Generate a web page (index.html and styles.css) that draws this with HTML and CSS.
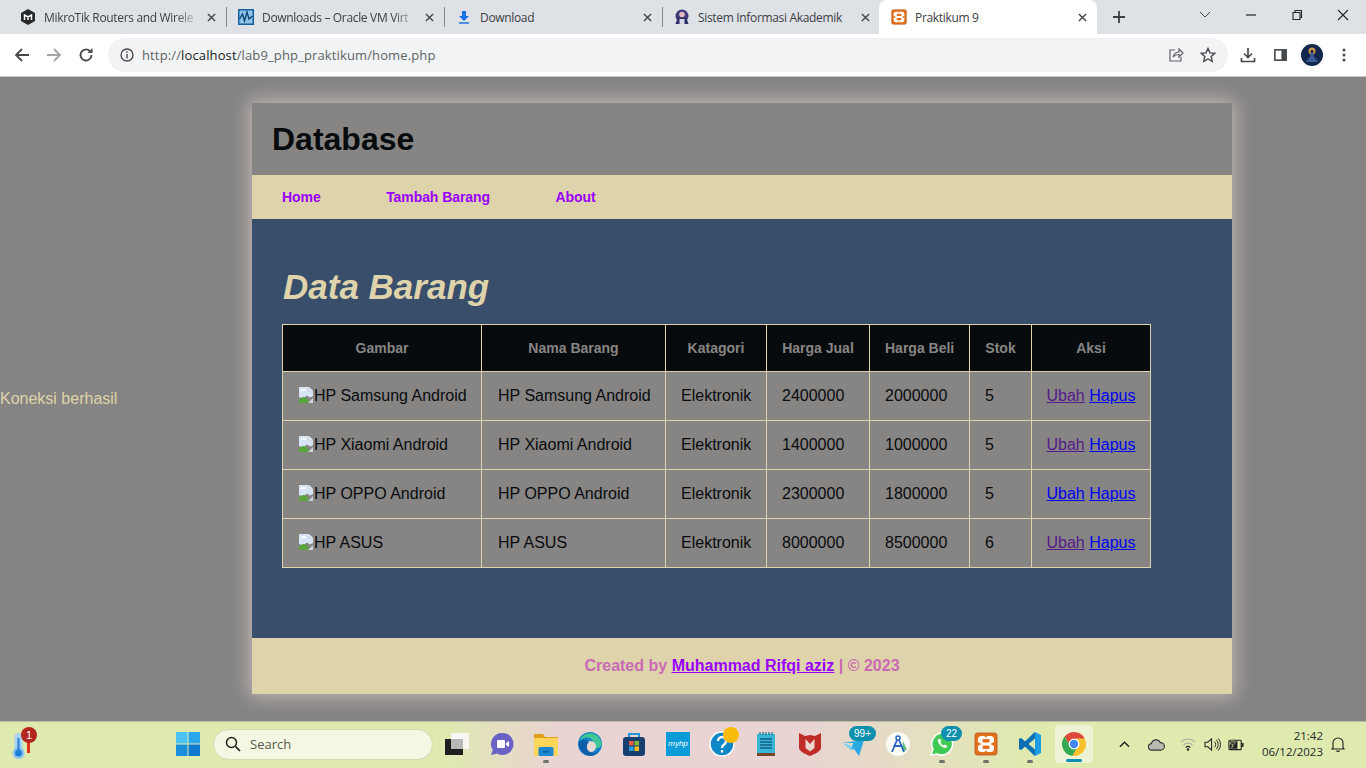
FILE: index.html
```html
<!DOCTYPE html>
<html lang="id">
<head>
<meta charset="utf-8">
<title>Praktikum 9</title>
<link rel="stylesheet" href="styles.css">
</head>
<body>
<svg class="defs" width="0" height="0" aria-hidden="true">
  <symbol id="x" viewBox="0 0 10 10"><path d="M1 1l8 8M9 1l-8 8" fill="none" stroke="#45484d" stroke-width="1.6"/></symbol>
  <symbol id="xampp" viewBox="0 0 24 24"><rect x="1" y="1" width="22" height="22" rx="2.500" fill="#e2701c"/><rect x="1" y="1" width="22" height="22" rx="2.500" fill="none" stroke="#b9551a" stroke-width=".8"/><rect x="4" y="4" width="16" height="16" rx="3.500" fill="#fff"/><rect x="8.500" y="7" width="7" height="3.500" rx="1.200" fill="#e2701c"/><rect x="8.500" y="13.500" width="7" height="3.500" rx="1.200" fill="#e2701c"/><path d="M4 10l3.500 2L4 14zM20 10l-3.500 2 3.500 2z" fill="#e2701c"/><path d="M10.500 4h3L12 5.800zM10.500 20h3L12 18.200z" fill="#e2701c"/></symbol>
  <symbol id="broken" viewBox="0 0 16 16"><path d="M1 0h10l4 4v5l-3 1.500-3-2-4 3-4-1.500z" fill="#d6e4f6"/><path d="M11 0l4 4h-4z" fill="#f6f8fb" stroke="#aeb6c0" stroke-width=".5"/><path d="M2.500 4a1.500 1.500 0 0 1 2-1.500 2 2 0 0 1 3.500 1.500z" fill="#fff"/><path d="M1 16v-3c3-4 6-4 9 0l1 3z" fill="#58a53a"/><path d="M10 16l5-5v5z" fill="#c8d4e0"/></symbol>
</svg>

<div class="browser">
  <div class="tabstrip">
    <div class="tab">
      <svg class="fav" viewBox="0 0 16 16"><path d="M8 0l7 4v8l-7 4-7-4V4z" fill="#26282b"/><path d="M4.500 11V6l3.500 2 3.500-2v5M8 8v3" fill="none" stroke="#fff" stroke-width="1.500"/></svg>
      <span class="tabtitle fade">MikroTik Routers and Wirele</span>
      <svg class="tabx"><use href="#x"/></svg>
    </div>
    <div class="tab sep">
      <svg class="fav" viewBox="0 0 16 16"><rect width="16" height="16" fill="#14609f"/><rect x="1.500" y="1.500" width="13" height="13" fill="#8fc4e8"/><path d="M1.500 10l3-5 2 7 2.500-9 2 7 3.500-3" fill="none" stroke="#0f4478" stroke-width="1.400"/></svg>
      <span class="tabtitle fade">Downloads – Oracle VM Virt</span>
      <svg class="tabx"><use href="#x"/></svg>
    </div>
    <div class="tab sep">
      <svg class="fav" viewBox="0 0 16 16"><path d="M6 2h4v5h3l-5 5-5-5h3z" fill="#1a73e8"/><path d="M3 14h10" stroke="#1a73e8" stroke-width="1.500"/></svg>
      <span class="tabtitle">Download</span>
      <svg class="tabx"><use href="#x"/></svg>
    </div>
    <div class="tab sep">
      <svg class="fav" viewBox="0 0 16 16"><circle cx="8" cy="7" r="6.500" fill="#3f3a78"/><circle cx="8" cy="5.500" r="2.800" fill="#e4b8c4"/><path d="M1.500 15l2-6h9l2 6z" fill="#2b2f66"/><path d="M5.500 15V10h5v5z" fill="#d9d6e8"/></svg>
      <span class="tabtitle">Sistem Informasi Akademik</span>
      <svg class="tabx"><use href="#x"/></svg>
    </div>
    <div class="tab active">
      <svg class="fav"><use href="#xampp"/></svg>
      <span class="tabtitle">Praktikum 9</span>
      <svg class="tabx"><use href="#x"/></svg>
    </div>
    <svg class="newtab" viewBox="0 0 14 14"><path d="M7 1v12M1 7h12" fill="none" stroke="#3c3f43" stroke-width="1.800"/></svg>
    <div class="winctl">
      <svg viewBox="0 0 46 16"><path d="M18 5l5 5 5-5" fill="none" stroke="#3c3f43"/></svg>
      <svg viewBox="0 0 46 16"><path d="M18 8h10" stroke="#22262a" stroke-width="1.200"/></svg>
      <svg viewBox="0 0 46 16"><path d="M19 5.500h7v7h-7zM21 5.500v-2h6.500v7H26" fill="none" stroke="#22262a" stroke-width="1.100"/></svg>
      <svg viewBox="0 0 46 16"><path d="M18 3l10 10M28 3L18 13" fill="none" stroke="#22262a" stroke-width="1.100"/></svg>
    </div>
  </div>
  <div class="toolbar">
    <svg class="tool" viewBox="0 0 16 16"><path d="M15 8H2M8 2L2 8l6 6" fill="none" stroke="#45484d" stroke-width="1.800"/></svg>
    <svg class="tool" viewBox="0 0 16 16"><path d="M1 8h13M8 2l6 6-6 6" fill="none" stroke="#a3a6aa" stroke-width="1.800"/></svg>
    <svg class="tool" viewBox="0 0 16 16"><path d="M13.500 8A5.500 5.500 0 1 1 11.800 4" fill="none" stroke="#45484d" stroke-width="1.800"/><path d="M14.500 1v5h-5z" fill="#45484d"/></svg>
    <div class="omnibox">
      <svg class="info" viewBox="0 0 14 14"><circle cx="7" cy="7" r="6" fill="none" stroke="#45484d" stroke-width="1.300"/><path d="M7 6v4.500M7 3.200v1.600" stroke="#45484d" stroke-width="1.400"/></svg>
      <span class="url">http://<b>localhost</b>/lab9_php_praktikum/home.php</span>
      <svg class="omni-act share" viewBox="0 0 16 16"><path d="M7 3H2v11h11v-4" fill="none" stroke="#5f6368" stroke-width="1.200"/><path d="M5 10c1-3 3-5 6-5V2l4 4-4 4V7.500C8.500 7.500 6.500 8.500 5 10z" fill="none" stroke="#5f6368" stroke-width="1.200"/></svg>
      <svg class="omni-act" viewBox="0 0 16 16"><path d="M8 1.500l2 4.400 4.700.5-3.500 3.200 1 4.700L8 12l-4.200 2.300 1-4.700L1.300 6.400 6 5.900z" fill="none" stroke="#45484d" stroke-width="1.400"/></svg>
    </div>
    <svg class="tool tool-dl" viewBox="0 0 16 16"><path d="M8 1v9M4 6.500L8 10.500l4-4M1.500 11v3.500h13V11" fill="none" stroke="#45484d" stroke-width="1.700"/></svg>
    <svg class="tool tool-side" viewBox="0 0 16 16"><rect x="2" y="2.500" width="12" height="11" fill="none" stroke="#45484d" stroke-width="1.700"/><rect x="9" y="2.500" width="5" height="11" fill="#45484d"/></svg>
    <svg class="avatar" viewBox="0 0 22 22"><circle cx="11" cy="11" r="11" fill="#14284f"/><circle cx="11" cy="7" r="3.500" fill="#c9964a"/><path d="M11 9c-1.500 0-2 2-2 4l-4 5h12l-4-5c0-2-.5-4-2-4z" fill="#3e5c93"/><circle cx="11" cy="7.500" r="1.500" fill="#10203f"/></svg>
    <svg class="tool tool-more" viewBox="0 0 4 16"><circle cx="2" cy="3" r="1.500" fill="#45484d"/><circle cx="2" cy="8" r="1.500" fill="#45484d"/><circle cx="2" cy="13" r="1.500" fill="#45484d"/></svg>
  </div>
</div>

<main class="page">
  <div class="status">Koneksi berhasil</div>
  <div class="container">
    <header class="head"><h1>Database</h1></header>
    <nav class="nav">
      <a href="#">Home</a>
      <a href="#">Tambah Barang</a>
      <a href="#">About</a>
    </nav>
    <section class="content">
      <h2>Data Barang</h2>
      <table>
        <thead>
          <tr><th class="c1">Gambar</th><th class="c2">Nama Barang</th><th class="c3">Katagori</th><th class="c4">Harga Jual</th><th class="c5">Harga Beli</th><th class="c6">Stok</th><th class="c7">Aksi</th></tr>
        </thead>
        <tbody>
          <tr><td><svg class="broken"><use href="#broken"/></svg>HP Samsung Android</td><td>HP Samsung Android</td><td>Elektronik</td><td>2400000</td><td>2000000</td><td>5</td><td class="aksi"><a class="visited" href="#">Ubah</a> <a class="link" href="#">Hapus</a></td></tr>
          <tr><td><svg class="broken"><use href="#broken"/></svg>HP Xiaomi Android</td><td>HP Xiaomi Android</td><td>Elektronik</td><td>1400000</td><td>1000000</td><td>5</td><td class="aksi"><a class="visited" href="#">Ubah</a> <a class="link" href="#">Hapus</a></td></tr>
          <tr><td><svg class="broken"><use href="#broken"/></svg>HP OPPO Android</td><td>HP OPPO Android</td><td>Elektronik</td><td>2300000</td><td>1800000</td><td>5</td><td class="aksi"><a class="link" href="#">Ubah</a> <a class="link" href="#">Hapus</a></td></tr>
          <tr><td><svg class="broken"><use href="#broken"/></svg>HP ASUS</td><td>HP ASUS</td><td>Elektronik</td><td>8000000</td><td>8500000</td><td>6</td><td class="aksi"><a class="visited" href="#">Ubah</a> <a class="link" href="#">Hapus</a></td></tr>
        </tbody>
      </table>
    </section>
    <footer class="foot">Created by <a href="#">Muhammad Rifqi aziz</a> | © 2023</footer>
  </div>
</main>

<div class="taskbar">
  <div class="weather">
    <svg viewBox="0 0 14 26" class="thermo"><rect x="2.500" y="0" width="8" height="24" rx="4" fill="#a9d3ee"/><circle cx="6.500" cy="20" r="6" fill="#8cc4ee"/><circle cx="6.500" cy="20" r="3.500" fill="#1f7fd6"/><path d="M6.500 5v14" stroke="#2a86dc" stroke-width="2.200"/></svg>
    <i class="pin"></i>
    <span class="alert">1</span>
  </div>
  <div class="tb-icon start">
    <svg viewBox="0 0 24 24"><rect x="0" y="0" width="11.500" height="11.500" fill="#4cc2f1"/><rect x="12.500" y="0" width="11.500" height="11.500" fill="#2ba6e8"/><rect x="0" y="12.500" width="11.500" height="11.500" fill="#1a8fdc"/><rect x="12.500" y="12.500" width="11.500" height="11.500" fill="#0f78cf"/></svg>
  </div>
  <div class="search">
    <svg viewBox="0 0 16 16"><circle cx="6.500" cy="6.500" r="5" fill="none" stroke="#222" stroke-width="1.500"/><path d="M10.500 10.500L15 15" stroke="#222" stroke-width="1.700"/></svg>
    <span>Search</span>
  </div>
  <div class="tb-icon">
    <svg viewBox="0 0 24 24" class="over"><rect x="5" y="1" width="18" height="16" fill="#f6f6f2"/><rect x="-1" y="7" width="18" height="16" fill="#1e1e1e"/><rect x="5" y="7" width="12" height="10" fill="#b8b8b8"/></svg>
  </div>
  <div class="tb-icon">
    <svg viewBox="0 0 24 24"><path d="M12.500 1a11 11 0 1 1-5.500 20.500L1 23l1.800-5A11 11 0 0 1 12.500 1z" fill="#6a62c4"/><rect x="7" y="8" width="8" height="8" rx="1.200" fill="#fff"/><path d="M16 11l3-2v6l-3-2z" fill="#fff"/></svg>
  </div>
  <div class="tb-icon dot">
    <svg viewBox="0 0 24 24"><path d="M0 3a1 1 0 0 1 1-1h8l2 3h13v19H0z" fill="#e0a01a"/><rect x="0" y="6" width="24" height="18" rx="1" fill="#fbd65a"/><rect x="4.500" y="15" width="15" height="9" rx="1.500" fill="#1c86d1"/><rect x="9" y="19" width="6" height="1.500" fill="#0d5e9e"/></svg>
  </div>
  <div class="tb-icon">
    <svg viewBox="0 0 24 24"><circle cx="12" cy="12" r="12" fill="#1383c9"/><path d="M1 10A11.500 11.500 0 0 1 23.500 11c.5 3-2 5.500-6 5.500-3 0-5.500-1-5.500-3.500 0-1.500 2-2.500 3-2.500C15 7 11 5 7.500 5.500 4.500 6 2.500 8 1 10z" fill="#3fc796"/><circle cx="12.500" cy="14.500" r="5.500" fill="#e8d8d2"/><path d="M11 10c-3 2-3 8 1 10 3 1.500 6 1 9-1-3 4.500-9 6-13.500 3.500C3 20 0 15 1 10c2-3 6-3 10 0z" fill="#0c5fa8"/></svg>
  </div>
  <div class="tb-icon">
    <svg viewBox="0 0 24 24"><path d="M7 7V2h10v5" fill="none" stroke="#1f97d4" stroke-width="2"/><rect x="1" y="5" width="22" height="19" rx="3" fill="#173f70"/><rect x="7" y="9" width="4.500" height="4.500" fill="#f15a3b"/><rect x="12.500" y="9" width="4.500" height="4.500" fill="#7cbc3b"/><rect x="7" y="14.500" width="4.500" height="4.500" fill="#21a3e0"/><rect x="12.500" y="14.500" width="4.500" height="4.500" fill="#fbbb1c"/></svg>
  </div>
  <div class="tb-icon">
    <div class="myhp">myhp</div>
  </div>
  <div class="tb-icon">
    <svg viewBox="0 0 28 28" class="help"><circle cx="14" cy="14" r="12" fill="#0f86c6" stroke="#fff" stroke-width="1.500"/><path d="M10 11a4 4 0 1 1 6 3.500c-1.500 1-2 1.500-2 3.500M14 20v2.500" fill="none" stroke="#fff" stroke-width="2.300"/><circle cx="23" cy="5" r="8" fill="#fbbc09"/></svg>
  </div>
  <div class="tb-icon">
    <svg viewBox="0 0 24 24"><path d="M3 2h18v19H3z" fill="#38b7d8"/><path d="M3 21h18v3H3z" fill="#7a4426"/><path d="M6 0v3M9 0v3M12 0v3M15 0v3M18 0v3" stroke="#0e6f8e" stroke-width="1.200"/><path d="M6 7h12M6 10h12M6 13h12M6 16h12" stroke="#125f85" stroke-width="1.700"/></svg>
  </div>
  <div class="tb-icon">
    <svg viewBox="0 0 24 24"><path d="M1 1l6 3 5-1 5 1 6-3v15c0 3-6 6-11 8C7 22 1 19 1 16z" fill="#c02b28"/><path d="M7.500 7l4.500 5 4.500-5v9L12 19.500 7.500 16z" fill="#ecd8d0"/></svg>
  </div>
  <div class="tb-icon badge-host">
    <svg viewBox="0 0 24 24"><path d="M0 11l22-3-5 16-5-7-3 1 2-7z" fill="#2aa8e0"/><path d="M0 11l11 3-2 4z" fill="#7fd0ef"/></svg>
    <span class="bubble wide">99+</span>
  </div>
  <div class="tb-icon">
    <svg viewBox="0 0 24 24"><circle cx="12" cy="12" r="12" fill="#fbfbf6"/><path d="M17 9l4 9-5 1z" fill="#5bbf7a"/><circle cx="12" cy="6" r="2" fill="none" stroke="#2b64c4" stroke-width="1.500"/><path d="M11 8l-5 12M13 8l5 12M7.500 14h9" fill="none" stroke="#2b64c4" stroke-width="1.800"/></svg>
  </div>
  <div class="tb-icon dot badge-host">
    <svg viewBox="0 0 24 24"><path d="M12 1a11 11 0 1 1-5 21l-6 1 2-6A11 11 0 0 1 12 1z" fill="#3fca55" stroke="#fff" stroke-width="1.500"/><path d="M8 7c-1 3 3 9 8 9l1.500-2-3-1.500-1 1c-1.500-.5-2.500-2-3-3l1-1L10 7z" fill="#fff"/></svg>
    <span class="bubble">22</span>
  </div>
  <div class="tb-icon dot">
    <svg><use href="#xampp"/></svg>
  </div>
  <div class="tb-icon dot">
    <svg viewBox="0 0 24 24"><path d="M17 0l6 3v18l-6 3L7 14.500 3 18l-2-1V7l2-1 4 3.500z" fill="#1f9ce6"/><path d="M17 0v24l-10-9.500L3 18l-2-1V7l2-1 4 3.500z" fill="#0c6fb4"/><path d="M17 6.500L10.500 12l6.500 5.500z" fill="#dfe8b4"/></svg>
  </div>
  <div class="tb-icon running">
    <svg viewBox="0 0 24 24"><path d="M12 0C8.200 0 4.800 1.800 2.600 4.500L6.800 11.800A5.200 5.200 0 0 1 12 6.800h10.800A12 12 0 0 0 12 0z" fill="#dd4a3c"/><path d="M2.600 4.500A12 12 0 0 0 10.400 23.900l4.200-7.300a5.200 5.200 0 0 1-7.800-4.800z" fill="#34a853"/><path d="M22.800 6.800H12a5.200 5.200 0 0 1 2.600 9.800l-4.200 7.300A12 12 0 0 0 22.800 6.800z" fill="#fbc02d"/><circle cx="12" cy="12" r="5.300" fill="#fff"/><circle cx="12" cy="12" r="4.200" fill="#4285f4"/></svg>
  </div>
  <div class="tray">
    <svg class="t-up" viewBox="0 0 12 8"><path d="M1 7l5-5 5 5" fill="none" stroke="#222" stroke-width="1.500"/></svg>
    <svg class="t-cloud" viewBox="0 0 18 14"><path d="M4 13a3.500 3.500 0 0 1-.5-7A5 5 0 0 1 13 5a4 4 0 0 1 1 8z" fill="#b9b9b2" stroke="#333" stroke-width="1.200"/></svg>
    <svg class="t-wifi" viewBox="0 0 16 14"><path d="M1 5a10 10 0 0 1 14 0M3.500 8a6.500 6.500 0 0 1 9 0" fill="none" stroke="#aeb3a4" stroke-width="1.200"/><path d="M5.800 10.500a3.200 3.200 0 0 1 4.400 0" fill="none" stroke="#222" stroke-width="1.200"/><circle cx="8" cy="12.500" r="1.200" fill="#222"/></svg>
    <svg class="t-vol" viewBox="0 0 18 16"><path d="M1 5.500h3L8 2v12l-4-3.500H1z" fill="none" stroke="#222" stroke-width="1.100"/><path d="M11 5a4 4 0 0 1 0 6M13 3a7 7 0 0 1 0 10M15 1.500a9.500 9.500 0 0 1 0 13" fill="none" stroke="#222" stroke-width="1"/></svg>
    <svg class="t-bat" viewBox="0 0 18 14"><rect x="1" y="3" width="13" height="10" rx="1" fill="none" stroke="#222" stroke-width="1.200"/><rect x="14.500" y="6" width="2" height="4" fill="#222"/><path d="M2 4h8v8H2z" fill="#222"/><path d="M6 0L2 7h3l-1 4 4-6H5z" fill="#222" stroke="#e0e8b0" stroke-width=".6"/></svg>
    <div class="clock"><span>21:42</span><span>06/12/2023</span></div>
    <svg class="t-bell" viewBox="0 0 14 16"><path d="M2 12V7a5 5 0 0 1 10 0v5l1 1H1zM5.500 14.500a1.600 1.600 0 0 0 3 0" fill="none" stroke="#222" stroke-width="1.100"/></svg>
  </div>
</div>
</body>
</html>
```

FILE: styles.css
```css
* { box-sizing: border-box; }
html, body { margin: 0; height: 100%; }
body {
  width: 1366px;
  height: 768px;
  overflow: hidden;
  display: flex;
  flex-direction: column;
  font-family: "Liberation Sans", Arial, sans-serif;
  background: #858482;
}
.defs { position: absolute; }

/* browser chrome */
.browser { height: 77px; flex: none; font-family: "Open Sans", "Noto Sans", sans-serif; }
.tabstrip { height: 34px; background: #dee1e6; display: flex; align-items: stretch; padding-left: 8px; }
.tab { width: 218px; display: flex; align-items: center; padding: 0 10.500px 0 12px; position: relative; }
.tab.sep::before { content: ""; position: absolute; left: 0; top: 7px; height: 20px; width: 1px; background: #85888c; }
.tab.active { background: #fff; border-radius: 8px 8px 0 0; margin-left: -1px; }
.fav { width: 16px; height: 16px; flex: none; }
.tabtitle { margin-left: 8px; font-size: 12px; color: #3c4043; white-space: nowrap; overflow: hidden; flex: 1; letter-spacing: -.33px; }
.fade { -webkit-mask-image: linear-gradient(90deg, #000 85%, transparent 100%); mask-image: linear-gradient(90deg, #000 85%, transparent 100%); }
.tabx { width: 9px; height: 9px; flex: none; margin-left: 8px; }
.newtab { width: 14px; height: 14px; align-self: center; margin-left: 15px; }
.winctl { margin-left: auto; display: flex; align-items: center; padding-bottom: 5px; }
.winctl svg { width: 46px; height: 16px; }
.toolbar { height: 43px; background: #fff; border-bottom: 1px solid #c8c8c8; display: flex; align-items: center; padding: 0 0 0 14px; }
.tool { width: 16px; height: 16px; flex: none; margin-right: 16px; }
.toolbar .tool:nth-of-type(3) { margin-right: 14px; }
.omnibox { width: 1120px; height: 34px; background: #f1f3f4; border-radius: 17px; display: flex; align-items: center; padding: 0 12px; flex: none; }
.info { width: 14px; height: 14px; flex: none; }
.url { font-size: 13px; color: #5f6368; margin-left: 8px; flex: 1; letter-spacing: .13px; }
.url b { font-weight: 400; color: #202124; }
.omni-act { width: 16px; height: 16px; flex: none; }
.share { margin-right: 16px; }
.toolbar .tool-dl { margin-left: 12px; margin-right: 17px; }
.toolbar .tool-side { margin-right: 13px; width: 15px; }
.avatar { width: 22px; height: 22px; flex: none; margin-right: 19px; }
.toolbar .tool-more { width: 4px; margin-right: 0; }

/* page */
.page { flex: 1; min-height: 0; display: grid; grid-template-columns: 252px 980px; align-items: center; }
.status { font-size: 16px; color: #ded3aa; white-space: nowrap; }
.container { margin: 26px 0 27px; box-shadow: 0 0 18px 2px #c9bcbc; display: flex; flex-direction: column; }
.head { height: 72px; background: #878583; padding: 0 20px; display: flex; align-items: center; }
h1 { margin: 0; font-size: 32px; font-weight: 700; color: #080b0e; }
.nav { height: 44px; background: #ded3aa; display: flex; align-items: center; gap: 65.500px; padding-left: 30px; }
.nav a { font-size: 14px; font-weight: 700; color: #9900ff; text-decoration: none; letter-spacing: -.07px; }
.content { height: 419px; background: #394e6a; padding: 46px 30px 0; }
h2 { margin: 0 0 16px; padding-left: 1px; font-size: 35px; line-height: 43px; font-weight: 700; font-style: italic; color: #ded3aa; }
table { border-collapse: collapse; width: 868px; table-layout: fixed; font-size: 16px; color: #080b0e; }
th, td { border: 1px solid #ded3aa; padding: 0 15px; white-space: nowrap; }
th { height: 47px; background: #080b0e; color: #878583; font-size: 14px; font-weight: 700; text-align: center; }
td { height: 49px; background: #878583; }
td:nth-child(2) { padding-left: 16px; }
.c1 { width: 199px; } .c2 { width: 184px; } .c3 { width: 101px; } .c4 { width: 103px; }
.c5 { width: 100px; } .c6 { width: 62px; } .c7 { width: 119px; }
.broken { width: 16px; height: 16px; vertical-align: -2px; }
.aksi { text-align: center; padding: 0 8px; }
.visited { color: #551a8b; }
.link { color: #0000ee; }
.foot { height: 56px; background: #ded3aa; display: flex; align-items: center; justify-content: center; gap: .28em; font-size: 16px; font-weight: 700; color: #c96ab5; }
.foot a { color: #9900ff; }

/* taskbar */
.taskbar { height: 47px; flex: none; position: relative; display: flex; align-items: center; padding: 0 0 2px 166px; border-top: 1px solid #b9bca6; background: linear-gradient(90deg, #dfeaae 0%, #dfeaae 32%, #e9d3d3 41%, #e9d3d3 58.500%, #dfeaae 76%, #dfeaae 100%); }
.weather { position: absolute; left: 0; top: 0; width: 40px; height: 40px; }
.thermo { position: absolute; left: 12px; top: 11px; width: 14px; height: 26px; }
.pin { position: absolute; left: 27px; top: 14px; width: 3px; height: 17px; background: #e0301e; }
.alert { position: absolute; left: 21px; top: 5px; width: 16px; height: 16px; border-radius: 50%; background: #b3261e; color: #fff; font-size: 11px; line-height: 16px; text-align: center; }
.tb-icon { width: 44px; height: 44px; flex: none; display: flex; align-items: center; justify-content: center; position: relative; }
.tb-icon > svg { width: 24px; height: 24px; overflow: visible; }
.tb-icon > svg.help { width: 28px; height: 28px; }
.start { margin-right: 3px; }
.search { width: 220px; height: 31px; flex: none; margin-right: 3px; border-radius: 16px; border: 1px solid #d4d9b6; background: #f4f7e1; display: flex; align-items: center; padding-left: 11px; gap: 9px; font-family: "Open Sans", sans-serif; font-size: 13px; color: #55574f; }
.search svg { width: 16px; height: 16px; }
.dot::after { content: ""; position: absolute; bottom: 3px; left: 19px; width: 6px; height: 3px; border-radius: 2px; background: #6f716b; }
.myhp { width: 24px; height: 24px; background: #0b9bd8; color: #fff; font-size: 8px; font-style: italic; line-height: 24px; text-align: center; overflow: hidden; }
.bubble { position: absolute; top: 4px; left: 21px; min-width: 21px; height: 15px; padding: 0 3px; border-radius: 8px; background: #0d8fae; color: #fff; font-size: 10px; line-height: 15px; text-align: center; }
.bubble.wide { left: 17px; width: 27px; }
.running { background: #eef3d6; border-radius: 4px; width: 38px; height: 38px; margin: 0 3px; }
.running::after { content: ""; position: absolute; bottom: 1px; left: 11px; width: 16px; height: 3px; border-radius: 2px; background: #0d8fae; }
.tray { position: absolute; right: 0; top: 0; bottom: 2px; width: 250px; display: flex; align-items: center; }
.tray svg { flex: none; }
.t-up { width: 11px; height: 8px; margin-left: 3px; }
.t-cloud { width: 17px; height: 13px; margin-left: 18px; }
.t-wifi { width: 16px; height: 14px; margin-left: 15px; }
.t-vol { width: 17px; height: 15px; margin-left: 8px; }
.t-bat { width: 17px; height: 14px; margin-left: 7px; }
.clock { width: 78px; display: flex; flex-direction: column; align-items: flex-end; font-family: "Open Sans", sans-serif; font-size: 11.500px; line-height: 16px; color: #26282a; }
.t-bell { width: 14px; height: 16px; margin-left: 8px; }
```
